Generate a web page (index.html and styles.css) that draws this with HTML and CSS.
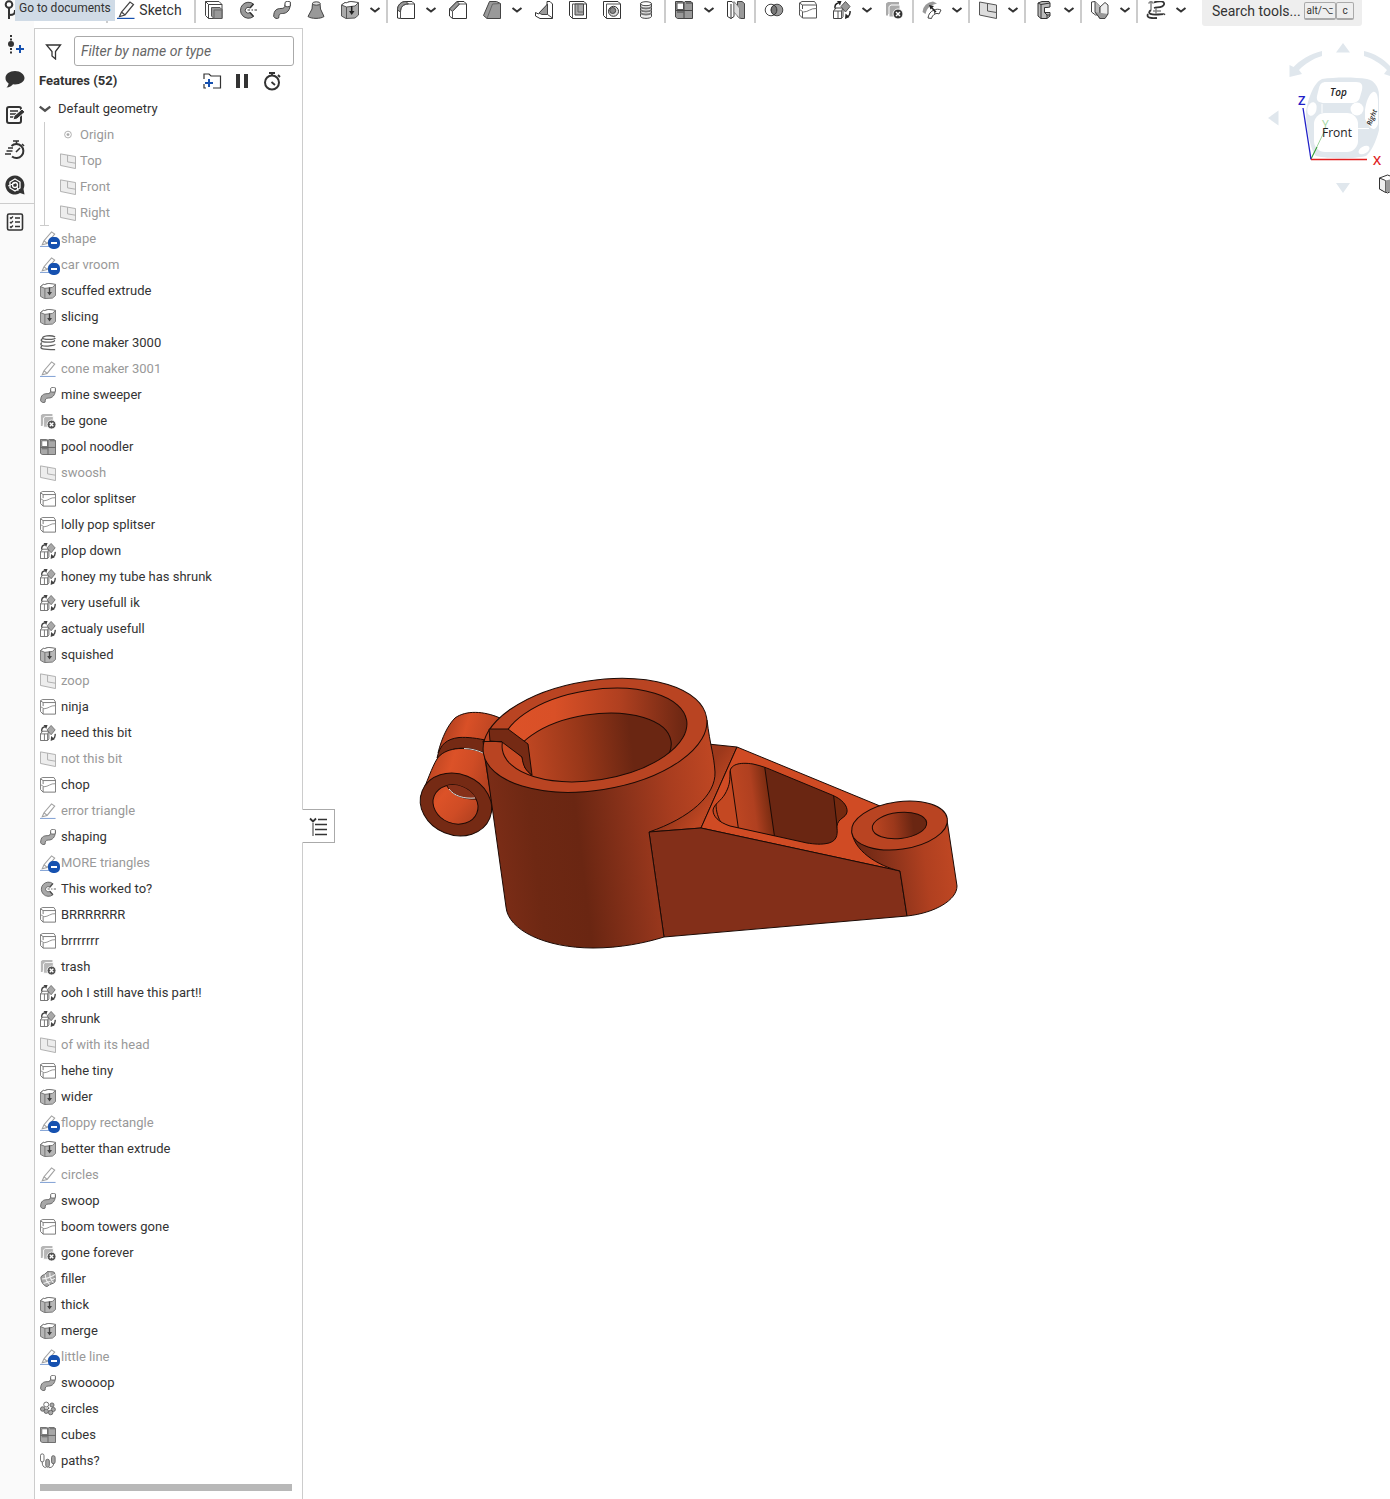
FILE: index.html
```html
<!DOCTYPE html>
<html lang="en">
<head>
<meta charset="utf-8">
<meta name="viewport" content="width=device-width, initial-scale=1">
<title>Part Studio</title>
<link rel="stylesheet" href="styles.css">
</head>
<body>
<svg class="sprite" aria-hidden="true">
  <symbol id="chev" viewBox="0 0 12 12"><path d="M1.500 4l4.500 3.500L10.500 4" fill="none" stroke="#333" stroke-width="2"/></symbol>
  <symbol id="sketch" viewBox="0 0 18 18"><path d="M2.500 15.500L4.500 11 13 1l3.500 2.500L8 14zM4.500 11L8 14" fill="#fff" stroke="#444" stroke-width="1.200"/><path d="M0 17.400h17.500" stroke="#1651b0" stroke-width="1.200"/></symbol>
  <symbol id="solid" viewBox="0 0 18 18"><path d="M.5.5H14l3 3v14H3.500l-3-3z" fill="#fff" stroke="#444"/><path d="M.5.5l3 3M3.500 17.500v-14H17" fill="none" stroke="#444"/><path d="M6.500 6.500H15l2 2v9H9l-2.500-2.500z" fill="#999" stroke="#555"/><path d="M9 17.500V9h8" fill="none" stroke="#666"/></symbol>
  <symbol id="revolve" viewBox="0 0 18 18"><path d="M14.500 3A8 8 0 1 0 14.500 15.500L11 11.500A2.900 2.900 0 1 1 11 7z" fill="#999" stroke="#444"/><path d="M14.500 3L11 7M14.500 15.500L11 11.500" stroke="#333" stroke-width="1.500"/><path d="M8.500 9h2.500M12.500 9h1.500M15.500 9H18" stroke="#333"/></symbol>
  <symbol id="sweep" viewBox="0 0 18 18"><path d="M.7 15.500C.7 9 4 7.500 8 7.500c3 0 4-1 4-4l5.300-1c0 7-3.500 10-8 10-3 0-3.300 1-3.600 4.500-1.500 1-4 .5-5-1.500z" fill="#999" stroke="#444"/><path d="M12 1.500c1-1.500 4.500-1.500 5.300-.5v4c-1.300 1-4 1-5.300 0z" fill="#fff" stroke="#444"/></symbol>
  <symbol id="loft" viewBox="0 0 18 18"><path d="M5.500 2.500L5 8 1 15.500c3 2.500 13 2.500 16 0L13.500 8l-.5-5.500z" fill="#999" stroke="#444"/><ellipse cx="9.300" cy="2.500" rx="3.800" ry="1.700" fill="#ddd" stroke="#444"/></symbol>
  <symbol id="thick" viewBox="0 0 18 18"><path d="M.5 4L4 1.500c2 1 3-1 6-1l7.500 1.500v12L14 17l-9 .5L.5 15z" fill="#aaa" stroke="#555"/><path d="M.5 4L4 1.500c2 1 3-1 6-1l7.500 1L14 5 5.500 6z" fill="#fff" stroke="#555"/><path d="M5.500 6v11.500" stroke="#555"/><path d="M10.700 5v7" stroke="#222" stroke-width="1.500"/><path d="M8 10h5.500l-2.800 4z" fill="#222"/></symbol>
  <symbol id="fillet" viewBox="0 0 18 18"><path d="M.5 17V9C.5 4 4 .5 9 .5h6L17.500 3v14.500H3.500z" fill="#fff" stroke="#333"/><path d="M.5 9C.5 4 4 .5 9 .5l2.500 2.500C6 3 3.500 6 3.500 11z" fill="#999" stroke="#444"/><path d="M3.500 17.500V11c0-5 3-8 8-8h6" fill="none" stroke="#555"/></symbol>
  <symbol id="chamfer" viewBox="0 0 18 18"><path d="M.5 15V8L8 .5h7L17.500 3v14.500H3.500z" fill="#fff" stroke="#333"/><path d="M.5 8L8 .5 10.500 3l-7 7.500z" fill="#999" stroke="#444"/><path d="M3.500 17.500v-7l7-7.500h7" fill="none" stroke="#555"/></symbol>
  <symbol id="draft" viewBox="0 0 18 18"><path d="M.5 14.500L6.500.5h7l4 2v15H4z" fill="#999" stroke="#444"/><path d="M4 17.500L9.500 3l8-.5" fill="none" stroke="#666"/></symbol>
  <symbol id="rib" viewBox="0 0 18 18"><path d="M.5 11.500l3 1.500L12 4V.5h3L17.500 3v14.500H5L.5 15z" fill="#fff" stroke="#333"/><path d="M4 12L12.500 3v10.500H7z" fill="#999" stroke="#444"/><path d="M12.500 13.500l5 3.500" stroke="#444"/></symbol>
  <symbol id="shell" viewBox="0 0 18 18"><path d="M.5.500H15L17.500 3v14.500H3.500l-3-3z" fill="#fff" stroke="#333"/><path d="M3.500 17.500V3h14" fill="none" stroke="#555"/><path d="M6 3v11h8.500V3z" fill="#aaa" stroke="#444"/><path d="M9 3v8h5.500" fill="none" stroke="#666"/></symbol>
  <symbol id="hole" viewBox="0 0 18 18"><path d="M.5.500H15L17.500 3v14.500H3.500l-3-3z" fill="#fff" stroke="#333"/><path d="M3.500 17.500V3h14" fill="none" stroke="#555"/><circle cx="10.500" cy="10.300" r="5" fill="#ddd" stroke="#333"/><circle cx="9.700" cy="9.500" r="3" fill="#888" stroke="#444"/></symbol>
  <symbol id="thread" viewBox="0 0 18 18"><path d="M3.500 2.500v13c1 2.500 10 2.500 11 0v-13" fill="#eee" stroke="#444"/><path d="M3.500 6c2 2 9 2 11 0M3.500 9c2 2 9 2 11 0M3.500 12c2 2 9 2 11 0" fill="none" stroke="#777" stroke-width="1.800"/><ellipse cx="9" cy="2.700" rx="5.500" ry="2" fill="#fff" stroke="#444"/></symbol>
  <symbol id="pattern" viewBox="0 0 18 18"><path d="M.5.500h7l1.500 1 1-1h6l1.500 1.500v15.500h-15L.5 16z" fill="#999" stroke="#444"/><path d="M2 2h6.500v6.500H2z" fill="#fff" stroke="#555"/><path d="M9 1v16.500M.5 9.500h17M2 11h6.500M11 2h6.500" fill="none" stroke="#444"/></symbol>
  <symbol id="mirror" viewBox="0 0 18 18"><path d="M.5.500H5l2 2v13l-3 2-3.500-2zM4 3v14.500" fill="#fff" stroke="#333"/><path d="M10.500.500H15l2.500 2v15H14l-3.500-2z" fill="#999" stroke="#444"/><path d="M7 .5L12.500 7v10.500L7 11z" fill="#ddd" stroke="#888"/></symbol>
  <symbol id="boolean" viewBox="0 0 20 18"><circle cx="7" cy="9" r="5.800" fill="#fff" stroke="#444"/><circle cx="13" cy="9" r="5.800" fill="#999" stroke="#444"/><path d="M10 4a5.800 5.800 0 0 1 0 10 5.800 5.800 0 0 1 0-10z" fill="#777" stroke="#333"/></symbol>
  <symbol id="split" viewBox="0 0 18 18"><path d="M.5 2L3 .5h12.500l2 3v13.500H3.500L.5 14z" fill="#fff" stroke="#555"/><path d="M.5 2l3 2h14M3.500 4v4M3.500 11v6" fill="none" stroke="#555"/><path d="M.5 8.500l4 2.500c5 0 7-4 13-3.500" fill="none" stroke="#777"/></symbol>
  <symbol id="transform" viewBox="0 0 18 18"><path d="M.5 10L3 7h7v8.500L8.500 17.500h-8z" fill="#fff" stroke="#444"/><path d="M.5 10h8v7.500M8.500 10L10 7M5 10v7" fill="none" stroke="#555"/><path d="M12.500.5l4.500 5-4.500 5.500-4.500-5.500z" fill="#999" stroke="#555"/><path d="M2 7.500C1.500 4 3 2.500 5.500 2" fill="none" stroke="#222" stroke-width="1.500"/><path d="M4 0h4.500L7 4.500zM12 18l.5-5.500 4 3.500z" fill="#222"/><path d="M17 10c.5 3-.5 4.500-2.500 6" fill="none" stroke="#222" stroke-width="1.500"/></symbol>
  <symbol id="delete" viewBox="0 0 18 18"><path d="M1 2.500L3 1h11v12H3v1.500H1z" fill="#aaa"/><path d="M4 5.500L6 4h9v12H4z" fill="#aaa" stroke="#fff"/><circle cx="13" cy="13" r="5" fill="#333" stroke="#fff"/><path d="M11 11l4 4m0-4l-4 4" stroke="#fff" stroke-width="1.500"/></symbol>
  <symbol id="moveface" viewBox="0 0 20 18"><path d="M.5 11A11 11 0 0 1 11 .5l4 2C8 4 5 7 3.500 13z" fill="#999"/><path d="M6 17c.5-4 2.500-6.500 6-8l1 4c-2 1-3 2.500-3.500 4.500zM12 9c2-1 5-1 7 0l-2 4c-1-.7-3-.7-4 0" fill="#fff" stroke="#444"/><path d="M14 11L9 6" stroke="#222" stroke-width="1.500"/><path d="M7 4l5 1-3.500 3.500z" fill="#222"/></symbol>
  <symbol id="plane" viewBox="0 0 18 18"><path d="M.5 1l17 3v13.500L.5 14z" fill="#ddd" stroke="#555"/><path d="M8.500 2.500v7.500l9 1.500" fill="none" stroke="#555"/></symbol>
  <symbol id="frame" viewBox="0 0 18 18"><path d="M3 2l4-1.500h7L15 2v4l-3 .5H9.500v5H15V15l-3 2.500H6L3 15z" fill="#bbb" stroke="#333"/><path d="M3 2l3 1.500v14M6 3.500L15 2M9.500 11.500L12 14h3M12 14v3" fill="none" stroke="#333"/></symbol>
  <symbol id="sheet" viewBox="0 0 18 18"><path d="M.5 1L4 .5l5 5v8L4.500 14l-4-3z" fill="#fff" stroke="#444"/><path d="M4 .5V11l5 6.500V6" fill="#bbb" stroke="#444"/><path d="M9 6l5-4.500L17 4v9l-8 4.500z" fill="#eee" stroke="#444"/><path d="M4 11l5 6.500h5l3-4.500" fill="#999" stroke="#444"/></symbol>
  <symbol id="curve" viewBox="0 0 20 18"><path d="M8 1.500C13-.5 19 0 18 3.500S11 6 8 7" fill="none" stroke="#333" stroke-width="1.800"/><path d="M5 9c-5 4 1 5 7 4.500s7-.5 6 0M2 13c-2 4 3 4.500 9 4" fill="none" stroke="#333" stroke-width="1.800"/><path d="M5 0v9M2.500 2.500L5 0l2.500 2.500M7 10h8M10 7v6" fill="none" stroke="#888" stroke-width="1.500"/></symbol>
  <symbol id="helix" viewBox="0 0 18 18"><path d="M17 2C11-.5 3 1.500 3 3.500s14 2 14 0M3 4C0 6 1 8 8 8s9-1 8-2M2 8.500c-3 3 1 4.500 7 4s8-1 8-2M2 12.500c-3 3 1 4 15 4" fill="none" stroke="#444" stroke-width="1.500"/></symbol>
  <symbol id="fill" viewBox="0 0 18 18"><path d="M1 7c1-3 4-2 6-5s7-1.500 9-.5C17.500 4 17 9 17 12c-2 3-6 2-9 5.500C4 17 1 12 1 7z" fill="#999" stroke="#444"/><path d="M2 9c5 0 10-2 15-5M4 14c5-1 9-3 13-6M6 4c0 5 2 9 5 11M11 2c0 4 1 8 4 11" fill="none" stroke="#eee" stroke-width="1.200"/></symbol>
  <symbol id="circpat" viewBox="0 0 18 18"><g fill="#999" stroke="#444"><circle cx="7" cy="4" r="2.800" fill="#fff"/><circle cx="3" cy="9" r="2.500"/><circle cx="13.500" cy="4.500" r="2.300"/><circle cx="15" cy="9.500" r="2.300"/><circle cx="7" cy="11.500" r="2.500"/><circle cx="12" cy="13" r="2.500"/></g><circle cx="9.500" cy="8" r="1" fill="#333"/></symbol>
  <symbol id="curvepat" viewBox="0 0 18 18"><g fill="#999" stroke="#444"><rect x=".5" y="1" width="4" height="9" rx="2" fill="#fff"/><rect x="6.500" y="7" width="4" height="9" rx="2"/><rect x="13" y="3" width="4" height="9" rx="2"/></g><path d="M2.500 10c0 4 1 6 4 6.500M10 16.500c4 0 5-2 5.500-5" fill="none" stroke="#444"/></symbol>
  <symbol id="origin" viewBox="0 0 18 18"><circle cx="9" cy="8.500" r="3.800" fill="none" stroke="#555"/><circle cx="9" cy="8.500" r="1.600" fill="#555"/></symbol>
</svg>

<div class="app">
  <nav class="rail" aria-label="Panels">
    <a class="tip" href="#documents">Go to documents</a>
    <button aria-label="Versions"><svg viewBox="0 0 20 20"><path d="M7 7v12M7 15c5 0 6-1 6-5" fill="none" stroke="#333" stroke-width="2"/><circle cx="7" cy="4.500" r="3.300" fill="#fff" stroke="#333" stroke-width="2"/></svg></button>
    <button aria-label="Add version"><svg viewBox="0 0 20 20"><circle cx="6" cy="9" r="3" fill="#333"/><path d="M6 0v2M6 3.500v2M6 13v2M6 16.500v2" stroke="#333" stroke-width="2"/><path d="M15 10v8M11 14h8" stroke="#1651b0" stroke-width="2"/></svg></button>
    <button aria-label="Comments"><svg viewBox="0 0 20 20"><path d="M10 1C4.500 1 .5 4 .5 8c0 2.500 1 4 3 5.200 0 2-1 3.300-2 4.300 3 0 5-1.500 6.500-3.200l2 .2c5.500 0 9.500-3 9.500-6.500S15.500 1 10 1z" fill="#333"/></svg></button>
    <button aria-label="Notes"><svg viewBox="0 0 20 20"><rect x="2" y="2" width="14" height="16" rx="2" fill="none" stroke="#333" stroke-width="2"/><path d="M5 6h8M5 9h6M5 12h4" stroke="#333" stroke-width="1.500"/><path d="M8 15l1-4 8-7 3 3-8 7z" fill="#333" stroke="#fafafa"/></svg></button>
    <button aria-label="Performance"><svg viewBox="0 0 20 20"><path d="M6.500 6A7 7 0 1 1 7 16.500" fill="none" stroke="#333" stroke-width="2"/><path d="M11.500 1v3M8 1h6M17 4l2 2M11 12l4-4M3 8h5M1.500 11h6M0 14h6" fill="none" stroke="#333" stroke-width="1.600"/></svg></button>
    <button aria-label="Assistant"><svg viewBox="0 0 20 20"><path d="M10 0.500a9.500 9.500 0 1 0 5 17.500L19.500 19.500 18.500 14A9.500 9.500 0 0 0 10 .5z" fill="#333"/><path d="M10 4l5 3v6l-5 3-5-3V7z" fill="none" stroke="#fff" stroke-width="1.300"/><circle cx="10" cy="10" r="2.500" fill="none" stroke="#fff" stroke-width="1.300"/><path d="M3 11l7-3M12 11l1 5" stroke="#fff"/></svg></button>
    <button class="after-rule" aria-label="Checklist"><svg viewBox="0 0 20 20"><rect x="2.500" y="2" width="15" height="16" rx="1.500" fill="none" stroke="#333" stroke-width="1.600"/><path d="M5 5.500l1 1L8 4.500M5 10l1 1 2-2M5 14.500l1 1 2-2M10 6h5M10 10h5M10 14.500h5" fill="none" stroke="#333" stroke-width="1.300"/></svg></button>
  </nav>

  <div class="main">
    <header class="toolbar">
      <i class="sep first"></i>
      <button class="sketch"><svg class="ico"><use href="#sketch"/></svg>Sketch</button>
      <i class="sep"></i>
      <button class="tool" aria-label="Extrude"><svg class="ico"><use href="#solid"/></svg></button>
      <button class="tool" aria-label="Revolve"><svg class="ico"><use href="#revolve"/></svg></button>
      <button class="tool" aria-label="Sweep"><svg class="ico"><use href="#sweep"/></svg></button>
      <button class="tool" aria-label="Loft"><svg class="ico"><use href="#loft"/></svg></button>
      <button class="tool" aria-label="Thicken"><svg class="ico"><use href="#thick"/></svg></button>
      <button class="more" aria-label="More solids"><svg><use href="#chev"/></svg></button>
      <i class="sep"></i>
      <button class="tool" aria-label="Fillet"><svg class="ico"><use href="#fillet"/></svg></button>
      <button class="more" aria-label="More fillets"><svg><use href="#chev"/></svg></button>
      <button class="tool" aria-label="Chamfer"><svg class="ico"><use href="#chamfer"/></svg></button>
      <button class="tool" aria-label="Draft"><svg class="ico"><use href="#draft"/></svg></button>
      <button class="more" aria-label="More drafts"><svg><use href="#chev"/></svg></button>
      <button class="tool" aria-label="Rib"><svg class="ico"><use href="#rib"/></svg></button>
      <button class="tool" aria-label="Shell"><svg class="ico"><use href="#shell"/></svg></button>
      <button class="tool" aria-label="Hole"><svg class="ico"><use href="#hole"/></svg></button>
      <button class="tool" aria-label="Thread"><svg class="ico"><use href="#thread"/></svg></button>
      <i class="sep"></i>
      <button class="tool" aria-label="Linear pattern"><svg class="ico"><use href="#pattern"/></svg></button>
      <button class="more" aria-label="More patterns"><svg><use href="#chev"/></svg></button>
      <button class="tool" aria-label="Mirror"><svg class="ico"><use href="#mirror"/></svg></button>
      <i class="sep"></i>
      <button class="tool" aria-label="Boolean"><svg class="ico wide"><use href="#boolean"/></svg></button>
      <button class="tool" aria-label="Split"><svg class="ico"><use href="#split"/></svg></button>
      <button class="tool" aria-label="Transform"><svg class="ico"><use href="#transform"/></svg></button>
      <button class="more" aria-label="More transforms"><svg><use href="#chev"/></svg></button>
      <button class="tool" aria-label="Delete part"><svg class="ico"><use href="#delete"/></svg></button>
      <i class="sep"></i>
      <button class="tool" aria-label="Move face"><svg class="ico wide"><use href="#moveface"/></svg></button>
      <button class="more" aria-label="More face tools"><svg><use href="#chev"/></svg></button>
      <i class="sep"></i>
      <button class="tool" aria-label="Plane"><svg class="ico"><use href="#plane"/></svg></button>
      <button class="more" aria-label="More planes"><svg><use href="#chev"/></svg></button>
      <i class="sep"></i>
      <button class="tool" aria-label="Frame"><svg class="ico"><use href="#frame"/></svg></button>
      <button class="more" aria-label="More frames"><svg><use href="#chev"/></svg></button>
      <i class="sep"></i>
      <button class="tool" aria-label="Sheet metal"><svg class="ico"><use href="#sheet"/></svg></button>
      <button class="more" aria-label="More sheet metal"><svg><use href="#chev"/></svg></button>
      <i class="sep"></i>
      <button class="tool" aria-label="Custom features"><svg class="ico wide"><use href="#curve"/></svg></button>
      <button class="more" aria-label="More custom features"><svg><use href="#chev"/></svg></button>
      <button class="search"><span>Search tools...</span><kbd>alt/⌥</kbd><kbd>c</kbd></button>
    </header>

    <div class="work">
      <aside class="side">
        <div class="filter">
          <svg viewBox="0 0 18 18"><path d="M1.500 3h14L10.500 9.500V17L7 14V9.500z" fill="none" stroke="#333" stroke-width="1.300"/></svg>
          <input type="text" aria-label="Filter features" placeholder="Filter by name or type">
        </div>
        <div class="head">
          <h2>Features (52)</h2>
          <button aria-label="New folder"><svg viewBox="0 0 20 20"><path d="M2 8V3h5l2 2h9.500v12H11M2 13v4h2" fill="none" stroke="#333" stroke-width="1.200"/><path d="M7 8v8M3 12h8" stroke="#1651b0" stroke-width="2"/></svg></button>
          <button aria-label="Pause"><svg viewBox="0 0 20 20"><path d="M4 3h4v14H4zM12 3h4v14h-4z" fill="#333"/></svg></button>
          <button aria-label="Regeneration times"><svg viewBox="0 0 20 20"><circle cx="10" cy="11.500" r="7" fill="none" stroke="#333" stroke-width="2"/><path d="M10 1.500v3M7 2h6M16 4l2 2M9.500 11l3.500 3" fill="none" stroke="#333" stroke-width="1.800"/></svg></button>
        </div>
        <ul class="tree">
          <li><button class="row folder"><svg class="arrow"><use href="#chev"/></svg>Default geometry</button>
            <ul class="group">
              <li class="row off"><svg><use href="#origin"/></svg>Origin</li>
              <li class="row off"><svg><use href="#plane"/></svg>Top</li>
              <li class="row off"><svg><use href="#plane"/></svg>Front</li>
              <li class="row off"><svg><use href="#plane"/></svg>Right</li>
            </ul>
          </li>
          <li class="row off lock"><svg><use href="#sketch"/></svg>shape</li>
          <li class="row off lock"><svg><use href="#sketch"/></svg>car vroom</li>
          <li class="row"><svg><use href="#thick"/></svg>scuffed extrude</li>
          <li class="row"><svg><use href="#thick"/></svg>slicing</li>
          <li class="row"><svg><use href="#helix"/></svg>cone maker 3000</li>
          <li class="row off"><svg><use href="#sketch"/></svg>cone maker 3001</li>
          <li class="row"><svg><use href="#sweep"/></svg>mine sweeper</li>
          <li class="row"><svg><use href="#delete"/></svg>be gone</li>
          <li class="row"><svg><use href="#pattern"/></svg>pool noodler</li>
          <li class="row off"><svg><use href="#plane"/></svg>swoosh</li>
          <li class="row"><svg><use href="#split"/></svg>color splitser</li>
          <li class="row"><svg><use href="#split"/></svg>lolly pop splitser</li>
          <li class="row"><svg><use href="#transform"/></svg>plop down</li>
          <li class="row"><svg><use href="#transform"/></svg>honey my tube has shrunk</li>
          <li class="row"><svg><use href="#transform"/></svg>very usefull ik</li>
          <li class="row"><svg><use href="#transform"/></svg>actualy usefull</li>
          <li class="row"><svg><use href="#thick"/></svg>squished</li>
          <li class="row off"><svg><use href="#plane"/></svg>zoop</li>
          <li class="row"><svg><use href="#split"/></svg>ninja</li>
          <li class="row"><svg><use href="#transform"/></svg>need this bit</li>
          <li class="row off"><svg><use href="#plane"/></svg>not this bit</li>
          <li class="row"><svg><use href="#split"/></svg>chop</li>
          <li class="row off"><svg><use href="#sketch"/></svg>error triangle</li>
          <li class="row"><svg><use href="#sweep"/></svg>shaping</li>
          <li class="row off lock"><svg><use href="#sketch"/></svg>MORE triangles</li>
          <li class="row"><svg><use href="#revolve"/></svg>This worked to?</li>
          <li class="row"><svg><use href="#split"/></svg>BRRRRRRR</li>
          <li class="row"><svg><use href="#split"/></svg>brrrrrrr</li>
          <li class="row"><svg><use href="#delete"/></svg>trash</li>
          <li class="row"><svg><use href="#transform"/></svg>ooh I still have this part!!</li>
          <li class="row"><svg><use href="#transform"/></svg>shrunk</li>
          <li class="row off"><svg><use href="#plane"/></svg>of with its head</li>
          <li class="row"><svg><use href="#split"/></svg>hehe tiny</li>
          <li class="row"><svg><use href="#thick"/></svg>wider</li>
          <li class="row off lock"><svg><use href="#sketch"/></svg>floppy rectangle</li>
          <li class="row"><svg><use href="#thick"/></svg>better than extrude</li>
          <li class="row off"><svg><use href="#sketch"/></svg>circles</li>
          <li class="row"><svg><use href="#sweep"/></svg>swoop</li>
          <li class="row"><svg><use href="#split"/></svg>boom towers gone</li>
          <li class="row"><svg><use href="#delete"/></svg>gone forever</li>
          <li class="row"><svg><use href="#fill"/></svg>filler</li>
          <li class="row"><svg><use href="#thick"/></svg>thick</li>
          <li class="row"><svg><use href="#thick"/></svg>merge</li>
          <li class="row off lock"><svg><use href="#sketch"/></svg>little line</li>
          <li class="row"><svg><use href="#sweep"/></svg>swoooop</li>
          <li class="row"><svg><use href="#circpat"/></svg>circles</li>
          <li class="row"><svg><use href="#pattern"/></svg>cubes</li>
          <li class="row"><svg><use href="#curvepat"/></svg>paths?</li>
        </ul>
        <div class="rollback"></div>
      </aside>

      <main class="canvas">
        <button class="handle" aria-label="Show feature list"><svg viewBox="0 0 20 20"><path d="M2 1.500l3 3 3-3" fill="none" stroke="#333" stroke-width="1.800"/><path d="M5 6v13" stroke="#999" stroke-width="2"/><path d="M10 2.500h9M7 7.500h12M7 12.500h12M7 17.500h12" stroke="#333" stroke-width="1.400"/></svg></button>

        <svg class="model" viewBox="410 670 560 290" role="img" aria-label="Bracket part">
          <defs>
            <linearGradient id="gBody" gradientUnits="userSpaceOnUse" x1="485" y1="790" x2="714" y2="762"><stop offset="0" stop-color="#7c2d17"/><stop offset=".18" stop-color="#6e2813"/><stop offset=".38" stop-color="#6a2612"/><stop offset=".6" stop-color="#8a321a"/><stop offset=".8" stop-color="#a93d1f"/><stop offset="1" stop-color="#bf4723"/></linearGradient>
            <linearGradient id="gCham" gradientUnits="userSpaceOnUse" x1="510" y1="0" x2="687" y2="0"><stop offset="0" stop-color="#dc5228"/><stop offset=".25" stop-color="#d95027"/><stop offset=".62" stop-color="#b04020"/><stop offset="1" stop-color="#6a2612"/></linearGradient>
            <linearGradient id="gBore" gradientUnits="userSpaceOnUse" x1="530" y1="760" x2="632" y2="764"><stop offset="0" stop-color="#bd4622"/><stop offset=".5" stop-color="#983719"/><stop offset="1" stop-color="#6a2612"/></linearGradient>
            <linearGradient id="gBoss" gradientUnits="userSpaceOnUse" x1="856" y1="855" x2="952" y2="843"><stop offset="0" stop-color="#6a2612"/><stop offset=".3" stop-color="#86311a"/><stop offset=".7" stop-color="#b04020"/><stop offset="1" stop-color="#bf4723"/></linearGradient>
            <linearGradient id="gBossHole" x1="0" x2="1"><stop offset="0" stop-color="#bd4622"/><stop offset=".4" stop-color="#9c381b"/><stop offset=".75" stop-color="#6a2612"/></linearGradient>
            <linearGradient id="gPocket" gradientUnits="userSpaceOnUse" x1="733" y1="790" x2="770" y2="785"><stop offset="0" stop-color="#bd4622"/><stop offset=".5" stop-color="#b04020"/><stop offset="1" stop-color="#72290f"/></linearGradient>
            <linearGradient id="gLug" gradientUnits="userSpaceOnUse" x1="430" y1="765" x2="495" y2="785"><stop offset="0" stop-color="#bd4622"/><stop offset=".3" stop-color="#dc5228"/><stop offset=".6" stop-color="#cf4c25"/><stop offset="1" stop-color="#a83d1e"/></linearGradient>
            <linearGradient id="gLug2" gradientUnits="userSpaceOnUse" x1="445" y1="725" x2="495" y2="740"><stop offset="0" stop-color="#b04020"/><stop offset=".4" stop-color="#d95027"/><stop offset="1" stop-color="#b94422"/></linearGradient>
            <linearGradient id="gWeb" gradientUnits="userSpaceOnUse" x1="680" y1="805" x2="700" y2="820"><stop offset="0" stop-color="#9c381b"/><stop offset="1" stop-color="#bd4622"/></linearGradient>
            <clipPath id="cTop"><ellipse cx="594.500" cy="735" rx="93.300" ry="45" transform="rotate(-9 594.500 735)"/></clipPath>
            <clipPath id="cPocket"><path id="pk" d="M730 774C729 764 740 762 753 764C762 766 767 768 774 771L832 795C842 799 848 806 847 812C846 818 838 818 837 826C837 832 839 840 829 843C821 845 814 844 807 843L730 826C718 822 713 816 713 810C714 804 721 801 725 794C729 787 730 782 730 774Z"/></clipPath>
            <clipPath id="cLug"><ellipse cx="455.500" cy="804.500" rx="23" ry="19" transform="rotate(22 455.500 804.500)"/></clipPath>
          </defs>
          <g stroke="#1c0a05" stroke-linejoin="round">
            <path d="M438 753C442 737 448 725 455 718C466 710 484 711 500 718L489 745L484 753Z" fill="url(#gLug2)"/>
            <path d="M437 758C440 744 447 739 459 737.500C468 737 476 738 490 741L486 754C465 744 448 748 437 758Z" fill="#752a14"/>
            <path d="M421 796C427 782 432 767 437 759C444 748 464 745 484 753L493 808L480 820L430 815Z" fill="url(#gLug)"/>
            <path d="M464 748.500c7 0 14 2 19 4.500" stroke="#ccc" fill="none"/>
            <ellipse cx="456" cy="804.500" rx="36.500" ry="30.500" transform="rotate(22 456 804.500)" fill="#752a14"/>
            <ellipse cx="455.500" cy="804.500" rx="23" ry="19" transform="rotate(22 455.500 804.500)" fill="url(#gLug)"/>
            <g clip-path="url(#cLug)"><path d="M446 784C450 794 462 800 478 799V780Z" fill="#86311a"/><path d="M449 789C454 796 464 799 475 798" fill="none" stroke="#ddd"/></g>

            <path d="M708 744L737 747L701 828L649 832L690 780Z" fill="url(#gWeb)"/>
            <path d="M737 747L880 806L905 835L900 871L701 828Z" fill="#d04b24"/>
            <path d="M649 832L701 828L900 871L907 916L664 937Z" fill="#832f19"/>
            <g clip-path="url(#cPocket)">
              <path d="M700 750H860V860H700Z" fill="#6a2612"/>
              <path d="M705 755H730L740 835H705Z" fill="#c44822" stroke="none"/>
              <path d="M728 755H763L775 840H740Z" fill="url(#gPocket)"/>
              <path d="M833 790L838 835L860 830V790Z" fill="#74290f"/>
              <path d="M716 803C716 812 718 818 722 824" fill="none"/>
            </g>
            <use href="#pk" fill="none"/>
            <path d="M852 830C852 850 878 866 900 871L907 916C935 913 957 900 957 886L947 820Z" fill="url(#gBoss)"/>
            <ellipse cx="899.500" cy="825.500" rx="48.300" ry="23.800" transform="rotate(-8 899.500 825.500)" fill="#b94422"/>
            <ellipse cx="899.500" cy="825.500" rx="27.300" ry="13" transform="rotate(-6 899.500 825.500)" fill="url(#gBossHole)"/>

            <path d="M483 741L506 907C508 930 545 948 593 948C620 948 645 943 664 937L649 832C690 818 716 795 715 772C714 755 710 745 707 720Z" fill="url(#gBody)"/>
            <ellipse cx="595" cy="735.300" rx="113" ry="54.800" transform="rotate(-9 595 735.300)" fill="#b94422"/>
            <g clip-path="url(#cTop)">
              <path d="M490 680H700V790H490Z" fill="url(#gCham)"/>
              <ellipse cx="592" cy="753.500" rx="80" ry="39" transform="rotate(-9 592 753.500)" fill="url(#gBore)"/>
              <path d="M500 738L522 757L525 768L534 778L515 785L495 760Z" fill="#c94a24"/>
            </g>
            <ellipse cx="594.500" cy="735" rx="93.300" ry="45" transform="rotate(-9 594.500 735)" fill="none"/>
            <path d="M489 729L508 729L528 744L532 775C526 771 523 766 522 757L502 742L490 741Z" fill="#752a14"/>
            <path d="M483 741.500H502" fill="none"/>
          </g>
        </svg>

        <svg class="cube" viewBox="1262 40 128 160" role="img" aria-label="View cube">
          <g fill="#e0e7ed">
            <path d="M1343 43l7 9.500h-14zM1336 183h14l-7 10zM1268 118l10.500-7.500v15z"/>
            <path d="M1322 51v5C1312 59 1305 64 1299 70l3 4-12.500 3V65l4 2C1300 60 1310 54 1322 51zM1364 51v5c10 3 17 8 23 14l-3 4 6 2V66C1384 59 1374 53 1364 51z"/>
            <path d="M1322 79C1335 77 1355 77 1367 79C1374 80 1379 87 1379 95L1379 130C1376 142 1371 152 1366 156C1355 159 1328 159 1316 156C1310 150 1306 125 1306 112C1308 100 1313 83 1322 79Z"/>
          </g>
          <g fill="#fff">
            <path d="M1326 82h30c6 0 7 3 6 8l-2 7c-1 4-4 6-9 6h-26c-6 0-9-2-8-7l2-8c1-4 3-6 7-6z"/>
            <rect x="1314" y="113" width="44" height="39" rx="11"/>
            <path d="M1373 92c3-1 5 3 5 10v22c-2 6-5 6-8 3l-5-8v-9c1-8 4-16 8-18z"/>
            <ellipse cx="1312" cy="109" rx="4.500" ry="7" transform="rotate(15 1312 109)"/>
            <circle cx="1357" cy="109" r="6.500"/>
            <ellipse cx="1364" cy="150" rx="6" ry="3.500" transform="rotate(-30 1364 150)"/>
          </g>
          <path d="M1322 104v9M1357 128.500h12" stroke="#fff"/>
          <path d="M1311 159L1325 130" stroke="#9fd49f"/><path d="M1311 159L1317 147" stroke="#2a9a2a"/>
          <path d="M1303 108L1311 159.500" stroke="#2020c8" stroke-width="1.300"/>
          <path d="M1311 159.500H1367" stroke="#e01f1f" stroke-width="1.300"/>
          <text class="axis" x="1298" y="105" fill="#2020c8">Z</text>
          <text class="axis" x="1373" y="165" fill="#e01f1f">X</text>
          <text class="axis y" x="1322" y="129" fill="#a5d8a5">Y</text>
          <text class="face" x="1322" y="137">Front</text>
          <text class="face top" x="1330" y="96">Top</text>
          <text class="face side-face" x="1371" y="126" transform="rotate(-68 1371 126)">Right</text>
          <path d="M1379.500 178l8-3 8 3v11l-8 4-8-4z" fill="#fff" stroke="#333"/><path d="M1379.500 178l6 2.500v12l-6-3.500z" fill="#eee" stroke="#333"/><path d="M1385.500 180.500l6-1.500v13h-6z" fill="#999"/>
        </svg>
      </main>
    </div>
  </div>
</div>
</body>
</html>
```
FILE: styles.css
```css
*, *::after { box-sizing: border-box; }
body {
  margin: 0;
  background: #fff;
  color: #333;
  font: 14px/20px Roboto, "Liberation Sans", sans-serif;
}
button {
  display: flex;
  align-items: center;
  justify-content: center;
  margin: 0;
  padding: 0;
  border: 0;
  background: none;
  color: inherit;
  font: inherit;
}
svg { display: block; flex: none; }
ul { margin: 0; padding: 0; list-style: none; }
.sprite { position: absolute; width: 0; height: 0; }

.app { display: flex; min-height: 100vh; overflow: hidden; }

/* left rail */
.rail {
  position: relative;
  flex: none;
  width: 34px;
  background: #fafafa;
}
.rail button { width: 30px; height: 35px; }
.rail button svg { width: 20px; height: 20px; }
.rail button:nth-of-type(1) { width: 24px; height: 28px; padding-bottom: 8px; }
.rail button:nth-of-type(2) { height: 34px; }
.rail .after-rule { width: 34px; height: 36px; margin-top: 1px; padding-right: 4px; border-top: 1px solid #ccc; }
.tip {
  position: absolute;
  z-index: 2;
  top: 0;
  left: 15px;
  height: 21px;
  padding: 0 4px;
  background: #d0dbe6;
  color: #333;
  font-size: 12px;
  line-height: 16px;
  text-decoration: none;
  white-space: nowrap;
}

/* toolbar */
.main { display: flex; flex: 1; flex-direction: column; min-width: 0; }
.toolbar { display: flex; flex: none; align-items: flex-start; height: 28px; }
.toolbar button { height: 20px; }
.sep { flex: none; width: 4px; height: 23px; border: solid #fff; border-width: 0 1px; background: #ccc; }
.sep.first { margin-left: 71px; }
.sketch { width: 84px; gap: 4px; padding-right: 3px; }
.toolbar .tool { width: 34px; }
.toolbar .more { width: 18px; padding-right: 2px; }
.more svg { width: 12px; height: 12px; }
.ico { width: 18px; height: 18px; }
.ico.wide { width: 20px; }
.toolbar .search {
  flex: none;
  justify-content: flex-start;
  width: 160px;
  height: 26px;
  margin-left: 11px;
  padding: 0 0 4px 10px;
  border-radius: 0 0 3px 3px;
  background: #eee;
}
.search span { margin-right: 3px; }
kbd {
  height: 18px;
  padding: 0 2px;
  border: 1px solid #aaa;
  border-bottom-width: 2px;
  border-radius: 2px;
  font: 10px/15px Roboto, "DejaVu Sans", sans-serif;
}
kbd:last-child { padding: 0 5px; }

/* feature list */
.work { display: flex; flex: 1; }
.side {
  flex: none;
  width: 269px;
  border: 1px solid #ccc;
  border-bottom: 0;
}
.filter { display: flex; align-items: center; gap: 11px; padding: 7px 8px 0 10px; }
.filter svg { width: 18px; height: 18px; }
.filter input {
  flex: 1;
  min-width: 0;
  height: 30px;
  padding: 0 6px;
  border: 1px solid #aaa;
  border-radius: 3px;
  color: #333;
  font: italic 14px Roboto, sans-serif;
}
.filter input::placeholder { color: #666; opacity: 1; }
.head { display: flex; gap: 10px; height: 30px; padding: 0 20px 0 4px; align-items: center; }
.head h2 { flex: 1; margin: 0; font-size: 13px; font-weight: 700; }
.head svg { width: 20px; height: 20px; }
.row {
  position: relative;
  display: flex;
  align-items: center;
  gap: 5px;
  height: 26px;
  padding-left: 5px;
  color: #333;
  font-size: 13px;
  white-space: nowrap;
}
.row svg { width: 16px; height: 16px; opacity: .85; }
.row.off { color: #999; }
.row.off svg { opacity: .5; }
.row.folder { gap: 6px; padding-left: 3px; }
.row.folder .arrow { width: 14px; height: 14px; }
.group { position: relative; margin-left: 9px; padding-left: 10px; border-left: 1px solid #ccc; }
.group::after {
  content: "";
  position: absolute;
  bottom: 0;
  left: -5px;
  width: 9px;
  border-bottom: 1px solid #ccc;
}
.group .row { gap: 4px; }
.lock::after {
  content: "";
  position: absolute;
  top: 11px;
  left: 13px;
  width: 12px;
  height: 12px;
  border: solid #1651b0;
  border-width: 5px 3px;
  border-radius: 5px;
  background: #fff;
}
.rollback { height: 7px; margin: 10px 10px 8px 5px; background: #b8b8b8; }

/* 3D viewport */
.canvas { position: relative; flex: 1; min-width: 0; }
.handle {
  position: absolute;
  top: 781px;
  left: -1px;
  width: 33px;
  height: 34px;
  padding: 2px 2px 0 0;
  border: 1px solid #aaa;
  border-left-color: #fff;
  background: #fff;
}
.handle svg { width: 20px; height: 20px; }
.model { position: absolute; top: 642px; left: 107px; width: 560px; height: 290px; }
.cube { position: absolute; top: 12px; right: 0; width: 128px; height: 160px; }
.axis { font: 600 13px "Open Sans", sans-serif; }
.axis.y { font-size: 12px; font-weight: 400; }
.face { font: 12px "Open Sans", sans-serif; fill: #222; }
.top { font-size: 10px; font-style: italic; font-weight: 600; }
.side-face { font-size: 7px; font-style: italic; font-weight: 600; }
```
